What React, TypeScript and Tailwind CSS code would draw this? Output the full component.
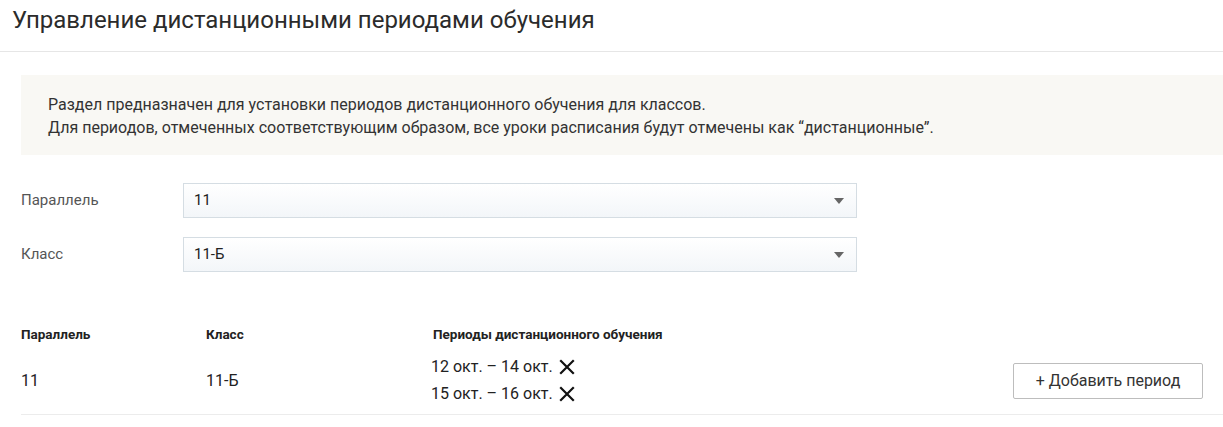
import React from "react";

function Select({ value }: { value: string }) {
  return (
    <div className="flex h-[35px] w-[674px] items-center justify-between border border-[#d5dde3] bg-gradient-to-b from-white to-[#f3f6f9] pl-[10px] pr-[12px] text-[15px] text-[#222]">
      <span>{value}</span>
      <svg width="10" height="6" viewBox="0 0 10 6">
        <path d="M0 0 L10 0 L5 6 Z" fill="#666" />
      </svg>
    </div>
  );
}

function Cross() {
  return (
    <svg width="16" height="16" viewBox="0 0 16 16" className="ml-[6px]">
      <path d="M2 2 L14 14 M14 2 L2 14" stroke="#111" strokeWidth="2.2" strokeLinecap="square" />
    </svg>
  );
}

export default function App() {
  return (
    <div className="w-[1223px] h-[427px] overflow-hidden bg-white font-['Roboto',sans-serif] text-[#333]">
      <div className="h-[52px] border-b border-[#e6e6e6] pl-[12px] pt-[5px]">
        <h1 className="text-[24px] leading-[30px] text-[#2b2b2b]">Управление дистанционными периодами обучения</h1>
      </div>
      <div className="pl-[21px]">
        <div className="mt-[23px] h-[80px] bg-[#f9f8f4] pl-[27px] pt-[18px] text-[16px] leading-[23px] text-[#333]">
          <p>Раздел предназначен для установки периодов дистанционного обучения для классов.</p>
          <p>Для периодов, отмеченных соответствующим образом, все уроки расписания будут отмечены как “дистанционные”.</p>
        </div>
        <div className="mt-[28px] flex flex-col gap-[19px]">
          <div className="flex items-center">
            <div className="w-[162px] text-[15px] text-[#555]">Параллель</div>
            <Select value="11" />
          </div>
          <div className="flex items-center">
            <div className="w-[162px] text-[15px] text-[#555]">Класс</div>
            <Select value="11-Б" />
          </div>
        </div>
        <div className="mt-[54px] flex text-[13.5px] font-bold leading-[16px] text-[#222]">
          <div className="w-[185px]">Параллель</div>
          <div className="w-[227px]">Класс</div>
          <div>Периоды дистанционного обучения</div>
        </div>
        <div className="mt-[5px] flex h-[68px] items-center border-b border-[#ececec] text-[16px] text-[#222]">
          <div className="w-[185px]">11</div>
          <div className="w-[225px]">11-Б</div>
          <div className="flex w-[582px] flex-col gap-[7px]">
            <div className="flex items-center leading-[20px]">12 окт. – 14 окт.<Cross /></div>
            <div className="flex items-center leading-[20px]">15 окт. – 16 окт.<Cross /></div>
          </div>
          <button className="flex h-[36px] w-[190px] items-center justify-center rounded-[2px] border border-[#bdbdbd] bg-white text-[16px] text-[#333]">
            + Добавить период
          </button>
        </div>
      </div>
    </div>
  );
}
